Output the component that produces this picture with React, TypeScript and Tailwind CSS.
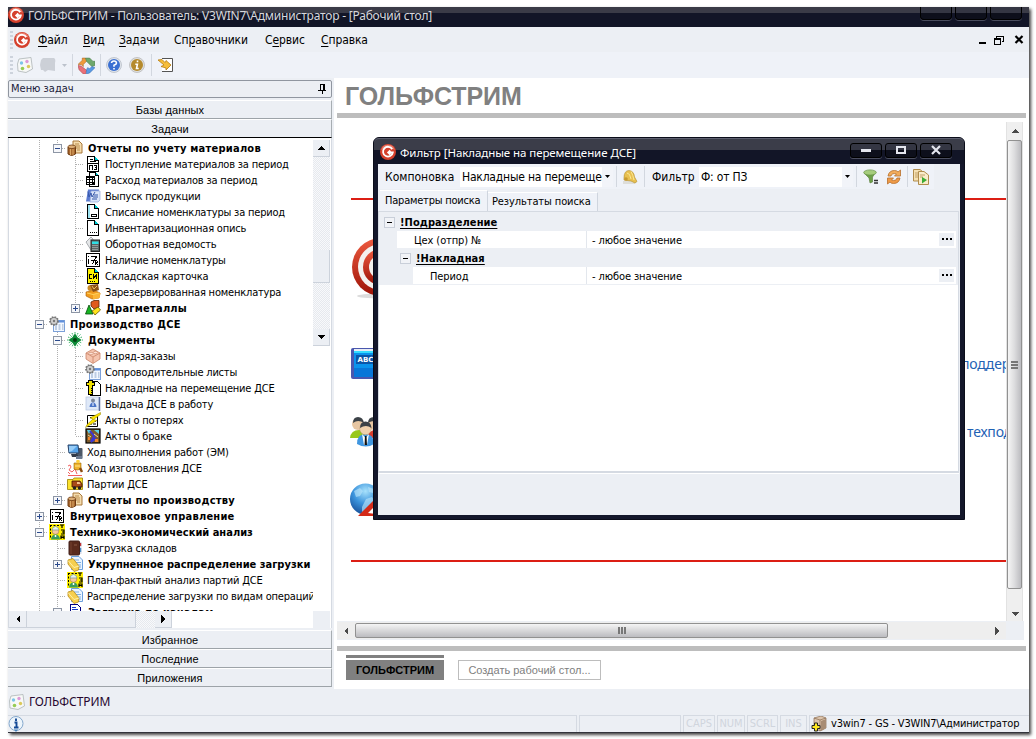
import type { ReactNode } from 'react';

const UI = "font-['DejaVu_Sans_Condensed','DejaVu_Sans',sans-serif]";
const SEGOE = "font-['Noto_Sans',sans-serif]";
const ARIAL = "font-['Liberation_Sans',sans-serif]";

/* ---------- icons ---------- */

function Svg({ children, size = 16, crisp = false }: { children: ReactNode; size?: number; crisp?: boolean }) {
  return (
    <svg width={size} height={size} viewBox="0 0 16 16" fill="none" shapeRendering={crisp ? 'crispEdges' : 'auto'} className="block shrink-0">
      {children}
    </svg>
  );
}

function Logo({ size = 16 }: { size?: number }) {
  return (
    <Svg size={size}>
      <circle cx="8" cy="8" r="8" fill="#d5402c" />
      <path d="M1.200 6A7 7 0 0 1 14.800 6Q8 1.500 1.200 6" fill="#ea7a68" />
      <path d="M12.200 5.200A4.900 4.900 0 1 0 12.800 8.500H8.500M10.300 6.500L8.200 8.500L10.300 10.500" stroke="#fff" strokeWidth="1.800" />
    </Svg>
  );
}

function Sheet({ fill = '#fff' }: { fill?: string }) {
  return (
    <>
      <path d="M2.500 .5H9.500L13.500 4.500V15.500H2.500Z" fill={fill} stroke="#000" />
      <path d="M9.500 .5V4.500H13.500" stroke="#000" fill="#00c8d0" />
    </>
  );
}

const icons: Record<string, ReactNode> = {
  barrel: (
    <Svg>
      <path d="M6 1H12L15 4V13H6Z" fill="#f4dcae" stroke="#a9793a" />
      <path d="M8 4H12M8 6H13M8 8H13M10 10H13" stroke="#b98a4b" />
      <path d="M1 7V14Q4.500 17 8.500 14V7" fill="#a8682f" stroke="#6e3b12" />
      <ellipse cx="4.800" cy="6.800" rx="3.800" ry="1.800" fill="#dcae76" stroke="#6e3b12" strokeWidth=".8" />
      <path d="M3.500 9V15M6 9V15" stroke="#dba866" />
    </Svg>
  ),
  pz: (
    <Svg crisp>
      <Sheet />
      <path d="M5 3.500H8M5 5.500H11M3 7.500H13" stroke="#000" />
      <path d="M4.500 14V9.500H7.500V14M9 9.500H11.500V13.500H9M10 11.500H12" stroke="#000" />
    </Svg>
  ),
  table: (
    <Svg crisp>
      <path d="M4.500 .5H10.500L13.500 3.500V14.500H4.500Z" fill="#fff" stroke="#000" />
      <path d="M10.500 .5V3.500H13.500" fill="#00c8d0" stroke="#000" />
      <rect x="1" y="4" width="9" height="9" fill="#000" />
      <path d="M2 6H4V7H2ZM5 6H7V7H5ZM8 6H9V7H8ZM2 8H4V10H2ZM5 8H7V10H5ZM8 8H9V10H8ZM2 11H4V12H2ZM5 11H7V12H5Z" fill="#fff" />
    </Svg>
  ),
  word: (
    <Svg>
      <path d="M3 1.500H14L12 13.500H1Z" fill="#5b7bd0" />
      <path d="M6 3H15V12L13 14H5Z" fill="#dbe5f8" stroke="#94a8da" strokeWidth=".7" />
      <path d="M3 3.500L4 9L6 5L7 9L10 4M9 7H13M8 9H13M7 11H12" stroke="#3556a8" />
    </Svg>
  ),
  sheetCyan: (
    <Svg crisp>
      <path d="M2.500 .5H9.500L13.500 4.500V14.500H2.500Z" fill="#fff" stroke="#000" />
      <path d="M3 1H5V14H3Z" fill="#9fe4f2" />
      <path d="M9.500 .5V4.500H13.500" stroke="#000" fill="#00c8d0" />
      <rect x="6.500" y="10.500" width="5" height="2" fill="#fff" stroke="#000" />
    </Svg>
  ),
  sheet: (
    <Svg crisp>
      <Sheet />
      <path d="M5 12.500H6M7 12.500H8M9 12.500H10M11 12.500H12" stroke="#000" />
    </Svg>
  ),
  calc: (
    <Svg>
      <path d="M1 6L6 1L8 3V12L6 14Z" fill="#e4e6e8" stroke="#8a8e92" strokeWidth=".7" />
      <rect x="6" y="4" width="8.500" height="11.500" fill="#5a6464" stroke="#222" />
      <rect x="7" y="5.500" width="6.500" height="2.500" fill="#2ee0e6" />
      <path d="M7.500 9.500H13M7.500 11.500H13M7.500 13.500H13" stroke="#c9d2d2" strokeDasharray="1 1" />
    </Svg>
  ),
  iz: (
    <Svg crisp>
      <rect x="1.500" y="1.500" width="13" height="13" fill="#fff" stroke="#000" />
      <path d="M3.500 4V5M3.500 7V12M6 4.500H11.500L7.500 12M6 8.500H12M10 12.500L13 9.500M10 9.500L13 13" stroke="#000" />
    </Svg>
  ),
  card: (
    <Svg crisp>
      <Sheet fill="#fff200" />
      <path d="M7 6.500H4.500V10.500H7M8.500 6V11M8.500 10L11.500 7M11.500 6V11M5 13.500H6M7 13.500H8M9 13.500H10" stroke="#000" />
    </Svg>
  ),
  boxes: (
    <Svg>
      <path d="M1 8L9 6L15 9L14 14L7 15L1 12Z" fill="#f09a1c" stroke="#a85c08" strokeWidth=".6" />
      <path d="M8 10L15.500 9L14.500 14L8 15.500Z" fill="#fbb436" />
      <circle cx="5.500" cy="4" r="3" fill="#c98a2a" />
      <path d="M5 1L13 0L14 6L8 8Z" fill="#8a5018" />
      <path d="M7 2L9 5L12 2" stroke="#f0bc60" />
      <path d="M2 9L8 10.500L14 9" stroke="#ffd25c" />
    </Svg>
  ),
  shapes: (
    <Svg>
      <path d="M6 2L9 .5H14V7L9 9L6 6Z" fill="#e05a1c" stroke="#5c2a0a" strokeWidth=".8" />
      <path d="M4 5L8 14H.500Z" fill="#17b522" stroke="#064d0a" strokeWidth=".8" />
      <path d="M7 11L13 7L15.500 10L10 15Z" fill="#ffe21c" stroke="#6a5a00" strokeWidth=".8" />
    </Svg>
  ),
  gearTable: (
    <Svg>
      <rect x="4.500" y="4.500" width="11" height="11" fill="#f3f8ff" stroke="#7ba0d8" />
      <path d="M4 5.500H15" stroke="#5f8fdc" strokeWidth="2" />
      <path d="M6 9H8M9.500 9H11.500M13 9H14.500M6 11H8M9.500 11H11.500M13 11H14.500M6 13H8M9.500 13H11.500M13 13H14.500" stroke="#8aa4c8" />
      <circle cx="5" cy="5" r="4" fill="#8a8a8a" stroke="#777" strokeDasharray="1.500 1.200" strokeWidth="1.800" />
      <circle cx="5" cy="5" r="3" fill="#d0d0d0" />
      <circle cx="5" cy="5" r="1.200" fill="#777" />
    </Svg>
  ),
  splat: (
    <Svg>
      <path d="M8 0V16M0 8H16M2.500 2.500L13.500 13.500M13.500 2.500L2.500 13.500M5 1L11 15M1 5L15 11M11 1L5 15M15 5L1 11" stroke="#3db368" strokeWidth="1" strokeDasharray="1.600 .9" />
      <path d="M8 3L10 6L13 8L10 10L8 13L6 10L3 8L6 6Z" fill="#0c8a35" stroke="#0c8a35" strokeWidth="1.600" />
      <circle cx="8" cy="8" r="2" fill="#033f14" />
    </Svg>
  ),
  brick: (
    <Svg>
      <path d="M1 5L8 1L15 5V11L8 15.500L1 11Z" fill="#f5c4ae" stroke="#c98468" strokeWidth=".8" />
      <path d="M1 5L8 9L15 5M8 9V15" stroke="#c98468" strokeWidth=".8" />
      <ellipse cx="6" cy="5.500" rx="2.200" ry="1.200" fill="#fce2d6" stroke="#c98468" strokeWidth=".6" />
      <ellipse cx="10.500" cy="4.500" rx="2.200" ry="1.200" fill="#fce2d6" stroke="#c98468" strokeWidth=".6" />
    </Svg>
  ),
  bolt: (
    <Svg crisp>
      <path d="M7.500 1.500H12.500L15.500 4.500V15.500H5.500V8Z" fill="#fff" stroke="#000" />
      <path d="M3.500 .5H7.500V2.500H9.500V5.500H7.500V14.500H3.500V5.500H1.500V2.500H3.500Z" fill="#f0e000" stroke="#000" />
      <path d="M6 8.500H8M6 10.500H8M6 12.500H8" stroke="#000" />
    </Svg>
  ),
  person: (
    <Svg>
      <rect x="1" y="1" width="13" height="13" fill="#dfe9f8" stroke="#b4c4de" strokeWidth=".7" />
      <path d="M14.500 1V15" stroke="#5a6ea0" strokeWidth="1.500" />
      <circle cx="8" cy="4.500" r="2" fill="#7c879c" />
      <path d="M4.500 11Q5 6.500 8 6.500T11.500 11Z" fill="#4a74c8" />
      <path d="M8 7V10" stroke="#fff" />
    </Svg>
  ),
  lightning: (
    <Svg>
      <path d="M2.500 3.500H12.500V14.500H2.500Z" fill="#fff" stroke="#000" />
      <path d="M5 5.500H10M5 12H7M9 9.500H11M8 12H11" stroke="#000" />
      <path d="M15.500 .5L5 6L8 7L2 12.500L.500 15.500L12 8.500L8.500 7.500L15.500 2.500Z" fill="#ffe600" stroke="#8a7c00" strokeWidth=".5" />
    </Svg>
  ),
  defect: (
    <Svg>
      <rect x="1" y="1" width="14" height="14" fill="#7c5a2c" stroke="#000" strokeWidth="1.200" />
      <path d="M2 2H6L4 6ZM9 2H14V6Z" fill="#5ad0e8" />
      <path d="M5 3L9 8L6 14L11 10" stroke="#3a35d8" strokeWidth="2" />
      <path d="M3 9H5V12H3ZM10 11H13V14H10Z" fill="#f0862a" />
      <path d="M9 6L13 9M3 7L6 9" stroke="#e8dca0" />
    </Svg>
  ),
  monitor: (
    <Svg>
      <rect x="9" y="4" width="6.500" height="11" rx="1" fill="#4c5868" />
      <path d="M1 1H11L12 9H2Z" fill="#56a4ea" stroke="#274064" />
      <path d="M2 2H10L5 7L2 8Z" fill="#97cdf8" />
      <path d="M4 10H10L12 13H5Z" fill="#323a48" />
      <path d="M9 12H15V15H9Z" fill="#6c7a90" />
    </Svg>
  ),
  hammer: (
    <Svg>
      <path d="M1 6L3 5L4 7L2 10L5 12M5 12L8 9L10 14M1 15.500H15M1 12L3 14" stroke="#f26060" strokeWidth="1" />
      <path d="M7 3H14V9Q10 11 7 9Z" fill="#efb22c" stroke="#976408" strokeWidth=".6" />
      <path d="M13 8L15 12" stroke="#8a4c10" strokeWidth="2.500" />
      <path d="M8 6H13" stroke="#ffe590" />
      <circle cx="11" cy="1.500" r="1.800" fill="#ffcf3c" />
    </Svg>
  ),
  truck: (
    <Svg>
      <path d="M.500 3.500H6L7 2H15.500V13.500H.500Z" fill="#fce22c" stroke="#9a8200" strokeWidth=".8" />
      <path d="M5 5H13L15 8V11H5Z" fill="#a84a18" stroke="#441600" strokeWidth=".8" />
      <path d="M10 6H12.500L13.500 8H10Z" fill="#f4c08c" />
      <circle cx="7.500" cy="12" r="1.700" fill="#222" />
      <circle cx="12.500" cy="12" r="1.700" fill="#222" />
    </Svg>
  ),
  worker: (
    <Svg>
      <rect width="16" height="16" fill="#ffee00" />
      <path d="M1 1.500H10M1.500 1V15" stroke="#000" strokeDasharray="2 1.500" />
      <path d="M11 1H15M13 1V4M12 6H15V10H12M13 8H15M12 15V12H15V15M12 13.500H15" stroke="#000" strokeWidth="1.200" />
      <circle cx="6.500" cy="7" r="3.400" fill="#f5c9a0" stroke="#946a42" strokeWidth=".5" />
      <path d="M3 6Q3.500 2.500 6.500 2.500T10 6Z" fill="#e9f3ee" stroke="#7a9a8a" strokeWidth=".7" />
      <path d="M2 15.500Q2.500 10.500 6.500 10.500T11 15.500Z" fill="#3a9c5c" />
      <path d="M6.500 11V13" stroke="#fff" strokeWidth="1.500" />
    </Svg>
  ),
  book: (
    <Svg>
      <path d="M12 2H14.500V14H12Z" fill="#d9ddea" />
      <path d="M13.500 3V6" stroke="#c03838" strokeWidth="1.500" />
      <path d="M13.500 8V12" stroke="#4a8ac0" strokeWidth="1.500" />
      <rect x="2" y="1" width="10.500" height="14" rx="1" fill="#5a2a1c" stroke="#42201a" />
      <path d="M4 2V14" stroke="#74402e" />
      <path d="M7 5H10" stroke="#8a5a44" />
    </Svg>
  ),
  gold: (
    <Svg>
      <path d="M4.500 .5H12L15.500 4V13.500H4.500Z" fill="#eaf4ff" stroke="#6ca0dc" />
      <path d="M7 4H12M8 6.500H14M10 9H14M11 11H14" stroke="#7cb0e4" />
      <path d="M1 4L6 2.500L12 10L11.500 14L7 15.500L1 8Z" fill="#f6cf50" stroke="#b98a18" strokeWidth=".8" />
      <path d="M1 4.500L7 11.500L12 10" stroke="#fff0a8" />
    </Svg>
  ),
  bluedoc: (
    <Svg crisp>
      <path d="M3.500 .5H10.500L13.500 3.500V15.500H3.500Z" fill="#fff" stroke="#000080" />
      <path d="M5 3.500H9M5 5.500H11" stroke="#1438c8" />
    </Svg>
  ),
};

function Palette() {
  return (
    <Svg>
      <path d="M2 2L14 .5L15.500 12L9 15.500L1 14L.500 7Z" fill="#f7f8f7" stroke="#b6bcbd" strokeWidth=".9" />
      <circle cx="4.500" cy="6" r="1.700" fill="#7cc4ea" />
      <circle cx="10" cy="4.500" r="1.700" fill="#dc9ad8" />
      <circle cx="11.500" cy="9.500" r="1.700" fill="#dbc95a" />
      <circle cx="5.500" cy="11.500" r="1.800" fill="#96cc54" />
    </Svg>
  );
}

function Helmet() {
  return (
    <Svg>
      <path d="M1 12H14L13 15H1Z" fill="#dededa" />
      <path d="M2 9Q2 1.500 7 1.500Q12 2 12.500 8L15 12.500L13 14L9 12L2 11Z" fill="#e8c050" stroke="#b08c2c" strokeWidth=".6" />
      <path d="M5 4Q8 4 9 10M9 2.500Q11 6 12 11" stroke="#fbe896" />
      <circle cx="4" cy="10" r="1.800" fill="#c79a30" />
    </Svg>
  );
}

/* ---------- window chrome ---------- */

function CaptionButton({ kind, cut = false }: { kind?: 'min' | 'max' | 'close'; cut?: boolean }) {
  return (
    <div className={`flex items-center justify-center border border-black bg-linear-to-b from-[#343643] from-50% to-[#0d0f1b] to-50% shadow-[0_1px_0_#4a4d5e] ${cut ? 'h-[13px] w-[32px] rounded-b-[4px] border-t-0' : 'h-[15px] w-[32px] rounded-[3px]'}`}>
      {kind && (
        <svg width="12" height="10" viewBox="0 0 12 10" fill="none" stroke="#e4e6ee" strokeWidth="2">
          {kind === 'min' && <path d="M1 5.500H11" strokeWidth="3" />}
          {kind === 'max' && <rect x="2" y="2" width="8" height="6" />}
          {kind === 'close' && <path d="M2 1L10 9M10 1L2 9" strokeWidth="2.200" />}
        </svg>
      )}
    </div>
  );
}

function Grip() {
  return <div className="h-[18px] w-[3px] bg-[repeating-linear-gradient(#cdd3dc_0_2px,transparent_2px_4px)]" />;
}

function Separator({ className = '' }: { className?: string }) {
  return <div className={`w-px bg-[#d2d7df] ${className}`} />;
}

function Arrow({ dir, color = '#000' }: { dir: 'up' | 'down' | 'left' | 'right'; color?: string }) {
  const d = { up: 'M0 6L4 2L8 6Z', down: 'M0 2L4 6L8 2Z', left: 'M6 0L2 4L6 8Z', right: 'M2 0L6 4L2 8Z' }[dir];
  return (
    <svg width="8" height="8" viewBox="0 0 8 8" fill={color} shapeRendering="crispEdges">
      <path d={d} />
    </svg>
  );
}

function MenuItem({ pre = '', hot, rest, className }: { pre?: string; hot: string; rest: string; className: string }) {
  return (
    <span className={`shrink-0 whitespace-nowrap ${className}`}>
      {pre}
      <u className="underline-offset-2">{hot}</u>
      {rest}
    </span>
  );
}

function TitleBar() {
  return (
    <div className={`flex h-[20px] shrink-0 items-start bg-[linear-gradient(#3a3b47_6px,#121527_6px)] ${SEGOE}`}>
      <Logo />
      <span className="ml-[4px] text-[12px] leading-[18px] tracking-[-0.21px] whitespace-nowrap text-[#d6d7dc]">
        ГОЛЬФСТРИМ - Пользователь: V3WIN7\Администратор - [Рабочий стол]
      </span>
      <div className="mr-[7px] ml-auto flex gap-[3px]">
        <CaptionButton cut />
        <CaptionButton cut />
        <CaptionButton cut />
      </div>
    </div>
  );
}

function MenuBar() {
  return (
    <div className={`flex h-[25px] shrink-0 items-center bg-[#eceff4] pl-[2px] text-[12px] tracking-[-0.1px] text-black ${UI}`}>
      <Grip />
      <div className="ml-[1px] w-[24px]"><Logo /></div>
      <MenuItem hot="Ф" rest="айл" className="w-[45px]" />
      <MenuItem hot="В" rest="ид" className="w-[36px]" />
      <MenuItem hot="З" rest="адачи" className="w-[55px]" />
      <MenuItem pre="Сп" hot="р" rest="авочники" className="w-[91px]" />
      <MenuItem pre="С" hot="е" rest="рвис" className="w-[56px]" />
      <MenuItem hot="С" rest="правка" className="w-[60px]" />
      <svg width="46" height="12" viewBox="0 0 46 12" fill="none" stroke="#000" className="mr-[5px] ml-auto" shapeRendering="crispEdges">
        <path d="M1 9H8" strokeWidth="2" />
        <path d="M18.500 4V2H25.500V7.500H24M18 2H26" />
        <rect x="16.500" y="5.500" width="6" height="5" />
        <path d="M16 5H23" strokeWidth="2" />
        <path d="M37.500 2L44.500 9M44.500 2L37.500 9" strokeWidth="2.200" shapeRendering="auto" />
      </svg>
    </div>
  );
}

function ToolBar() {
  return (
    <div className="flex h-[26px] shrink-0 items-center bg-[#eff2f8] pl-[2px]">
      <Grip />
      <div className="ml-[4px]"><Palette /></div>
      <div className="ml-[7px]">
        <Svg><path d="M3 1H14Q16 2 15 6V14L8 13L5 15L3 13H1L0 8L1 3Z" fill="#ccd0d7" /></Svg>
      </div>
      <svg width="5" height="3" className="ml-[6px]"><path d="M0 0H5L2.500 3Z" fill="#bcc2cc" /></svg>
      <Separator className="ml-[5px] h-[22px]" />
      <div className="ml-[5px]">
        <Svg size={17}>
          <path d="M0 7L4 3V1H7L9 3L5 7V9L3 7Z" fill="#ef9a3c" stroke="#a86020" strokeWidth=".5" />
          <path d="M7 1H11L14 4H16V8L13 9L10 6L8 4Z" fill="#6fa86c" stroke="#4c784c" strokeWidth=".5" />
          <path d="M0 8L3 8.500L8 12.500L7 16H5L1 12Z" fill="#ea7078" stroke="#a44048" strokeWidth=".5" />
          <path d="M13 9L16 10L11 15L8 16V12L9 10L11 11Z" fill="#5a9ae4" stroke="#346ab0" strokeWidth=".5" />
        </Svg>
      </div>
      <Separator className="ml-[5px] h-[22px]" />
      <div className="ml-[5px]">
        <Svg>
          <circle cx="8" cy="8" r="7.500" fill="#dfe4ea" stroke="#b1b8c2" strokeWidth=".7" />
          <circle cx="8" cy="8" r="6" fill="#3a6fd2" />
          <path d="M5.500 6Q5.800 4 8 4T10.500 6Q10.500 7.500 8 8.300V9.800M8 11V12.600" stroke="#fff" strokeWidth="1.600" />
        </Svg>
      </div>
      <div className="ml-[7px]">
        <Svg>
          <circle cx="8" cy="8" r="7.500" fill="#dfe0e0" stroke="#b1b2b2" strokeWidth=".7" />
          <circle cx="8" cy="8" r="6" fill="#b58a2c" />
          <path d="M8.500 3.500V5.300M6.300 7.300H8.400L7.500 11.500H9.700" stroke="#fff" strokeWidth="1.600" />
        </Svg>
      </div>
      <Separator className="ml-[6px] h-[22px]" />
      <div className="ml-[6px]">
        <Svg>
          <path d="M4 1.500H14.500V14.500H4" fill="#fff" stroke="#555" />
          <path d="M0 3L4 2.500L7 5.500L8 4V3.500L13 8L8 13V11L3 9.500L6 8Z" fill="#f6bd38" stroke="#b67c10" strokeWidth=".8" />
        </Svg>
      </div>
    </div>
  );
}

/* ---------- task tree ---------- */

type Row = { guides: string; box?: '+' | '-'; icon: string; text: string; bold?: boolean; tight?: boolean };

// guides: "|" passing line, " " empty, "t" branch, "l" last branch
const rows: Row[] = [
  { guides: '|l', box: '-', icon: 'barrel', text: 'Отчеты по учету материалов', bold: true },
  { guides: '| t', icon: 'pz', text: 'Поступление материалов за период' },
  { guides: '| t', icon: 'table', text: 'Расход материалов за период' },
  { guides: '| t', icon: 'word', text: 'Выпуск продукции' },
  { guides: '| t', icon: 'sheetCyan', text: 'Списание номенклатуры за период' },
  { guides: '| t', icon: 'sheet', text: 'Инвентаризационная опись' },
  { guides: '| t', icon: 'calc', text: 'Оборотная ведомость' },
  { guides: '| t', icon: 'iz', text: 'Наличие номенклатуры' },
  { guides: '| t', icon: 'card', text: 'Складская карточка' },
  { guides: '| t', icon: 'boxes', text: 'Зарезервированная номенклатура' },
  { guides: '| l', box: '+', icon: 'shapes', text: 'Драгметаллы', bold: true },
  { guides: 't', box: '-', icon: 'gearTable', text: 'Производство ДСЕ', bold: true },
  { guides: '|t', box: '-', icon: 'splat', text: 'Документы', bold: true },
  { guides: '||t', icon: 'brick', text: 'Наряд-заказы' },
  { guides: '||t', icon: 'gearTable', text: 'Сопроводительные листы' },
  { guides: '||t', icon: 'bolt', text: 'Накладные на перемещение ДСЕ' },
  { guides: '||t', icon: 'person', text: 'Выдача ДСЕ в работу' },
  { guides: '||t', icon: 'lightning', text: 'Акты о потерях' },
  { guides: '||l', icon: 'defect', text: 'Акты о браке' },
  { guides: '|t', icon: 'monitor', text: 'Ход выполнения работ (ЭМ)' },
  { guides: '|t', icon: 'hammer', text: 'Ход изготовления ДСЕ' },
  { guides: '|t', icon: 'truck', text: 'Партии ДСЕ' },
  { guides: '|l', box: '+', icon: 'barrel', text: 'Отчеты по производству', bold: true },
  { guides: 't', box: '+', icon: 'iz', text: 'Внутрицеховое управление', bold: true },
  { guides: 't', box: '-', icon: 'worker', text: 'Технико-экономический анализ', bold: true, tight: true },
  { guides: '|t', icon: 'book', text: 'Загрузка складов' },
  { guides: '|t', box: '+', icon: 'gold', text: 'Укрупненное распределение загрузки', bold: true, tight: true },
  { guides: '|t', icon: 'worker', text: 'План-фактный анализ партий ДСЕ' },
  { guides: '|t', icon: 'gold', text: 'Распределение загрузки по видам операций' },
  { guides: '|t', box: '-', icon: 'bluedoc', text: 'Загрузка по каналам', bold: true },
];

function Guide({ kind, box }: { kind: string; box?: '+' | '-' }) {
  return (
    <svg width="18" height="16" viewBox="0 0 18 16" fill="none" shapeRendering="crispEdges" className="block shrink-0">
      <g stroke="#b0b0b0" strokeDasharray="1 1">
        {(kind === '|' || kind === 't') && <path d="M9.500 0V16" />}
        {kind === 'l' && <path d="M9.500 0V8" />}
        {(kind === 't' || kind === 'l') && <path d="M10 8.500H18" />}
      </g>
      {box && (
        <>
          <rect x="5.500" y="4.500" width="8" height="8" fill="#f6f7fa" stroke="#8d96a5" />
          <path d={box === '+' ? 'M7 8.500H12M9.500 6V11' : 'M7 8.500H12'} stroke="#2b4a8c" />
        </>
      )}
    </svg>
  );
}

function labelStyle(row: Row) {
  if (!row.bold) return 'ml-[4px] tracking-[-0.19px]';
  return row.tight ? 'ml-[5px] font-bold' : 'ml-[5px] font-bold tracking-[0.24px]';
}

function TreeRow({ row }: { row: Row }) {
  const cells = row.guides.split('');
  return (
    <div className="flex h-[16px] items-center pl-[21px]">
      {cells.map((kind, i) => (
        <Guide key={i} kind={kind} box={i === cells.length - 1 ? row.box : undefined} />
      ))}
      <div className="ml-px">{icons[row.icon]}</div>
      <span className={`pt-[2px] text-[11px] leading-[14px] whitespace-nowrap text-black ${labelStyle(row)}`}>{row.text}</span>
    </div>
  );
}

const dots = 'bg-[repeating-conic-gradient(#e6e9ee_0_25%,#f8f9fb_0_50%)] bg-size-[2px_2px]';
const scrollBox = 'flex items-center justify-center border-r border-b border-[#ccd2db] bg-[#eceff4]';

function SectionButton({ label, last = false }: { label: string; last?: boolean }) {
  return (
    <div className={`flex h-[19px] shrink-0 items-center justify-center border-t border-r border-b border-t-white border-r-[#a7adb2] bg-[#eceff4] pt-px pl-px ${last ? 'border-b-black' : 'border-b-[#9da3a8]'} text-[11px] leading-none tracking-[0.1px] text-black ${ARIAL}`}>
      {label}
    </div>
  );
}

function TaskPanel() {
  return (
    <div className={`flex w-[324px] shrink-0 flex-col pt-[2px] ${UI}`}>
      <div className="flex h-[18px] shrink-0 items-center justify-between rounded-[2px] border border-[#9096a0] pr-[5px] pl-[2px] text-[11px] text-[#1b1b3a]">
        <span className="pt-px">Меню задач</span>
        <svg width="8" height="10" viewBox="0 0 8 10" fill="none" stroke="#000" shapeRendering="crispEdges">
          <path d="M2.500 6V.5H6V6M5.500 0V6M0 6.500H8M4 7V10" />
        </svg>
      </div>
      <div className="pt-[2px]" />
      <SectionButton label="Базы данных" />
      <SectionButton label="Задачи" last />
      <div className="flex h-[490px] shrink-0 flex-col border-r border-l border-[#d5dae2] bg-white pt-[2px]">
        <div className="flex h-[471px] shrink-0 pr-px">
          <div className="flex-1 overflow-hidden">
            {rows.map((row) => <TreeRow key={row.text} row={row} />)}
          </div>
          <div className="flex h-[206px] w-[17px] flex-col">
            <div className={`h-[17px] ${scrollBox}`}><Arrow dir="up" /></div>
            <div className={`h-[93px] ${dots}`} />
            <div className={`h-[33px] ${scrollBox}`} />
            <div className={`flex-1 ${dots}`} />
            <div className={`h-[17px] ${scrollBox}`}><Arrow dir="down" /></div>
          </div>
        </div>
        <div className="flex h-[17px] pr-px">
          <div className={`w-[18px] ${scrollBox}`}><Arrow dir="left" /></div>
          <div className={`w-[109px] ${scrollBox}`} />
          <div className={`w-[19px] ${dots}`} />
          <div className={`w-[17px] ${scrollBox}`}><Arrow dir="right" /></div>
          <div className="ml-auto w-[17px] bg-[#eceff4]" />
        </div>
      </div>
      <div className="pt-[2px]" />
      <SectionButton label="Избранное" />
      <SectionButton label="Последние" />
      <SectionButton label="Приложения" />
    </div>
  );
}

/* ---------- desktop ---------- */

function DesktopContent() {
  return (
    <div className="h-[499px] w-[669px] overflow-hidden bg-white pt-[76px] pl-[13px]">
      <div className="ml-px h-[2px] bg-[#dc1e14]" />
      <svg width="62" height="62" viewBox="0 0 62 62" className="mt-[38px] block">
        <defs>
          <linearGradient id="red" x1="0" y1="0" x2="0" y2="1">
            <stop offset="0" stopColor="#ee5b40" />
            <stop offset="1" stopColor="#9c1206" />
          </linearGradient>
        </defs>
        <ellipse cx="31" cy="58" rx="24" ry="2.500" fill="#dcdcdc" />
        <circle cx="31" cy="29" r="29" fill="url(#red)" />
        <circle cx="31" cy="29" r="23" fill="#f4f1ee" />
        <circle cx="31" cy="29" r="18" fill="url(#red)" />
        <circle cx="31" cy="29" r="12" fill="#f4f1ee" />
        <circle cx="31" cy="29" r="7" fill="url(#red)" />
      </svg>
      <div className="mt-[48px] flex h-[32px] items-center">
        <svg width="46" height="32" viewBox="0 0 46 32" className="ml-px shrink-0">
          <path d="M2 0H46V31H2Q0 31 0 29V2Q0 0 2 0Z" fill="#4a57ae" />
          <path d="M3 1H46V3H3Z" fill="#e8ecf4" />
          <path d="M3 3H46V29H3Z" fill="#0a92ec" />
          <path d="M3 3H46V5H3Z" fill="#35dcff" />
          <path d="M3 20H46V29H3Z" fill="#0876d8" />
          <rect x="5" y="7" width="38" height="9" fill="#0b55a8" />
          <text x="6.500" y="14" fontSize="7" fontWeight="bold" fill="#fff" fontFamily="DejaVu Sans">ABC</text>
        </svg>
        <span className={`ml-[564px] shrink-0 text-[14px] leading-[20px] tracking-[-0.2px] text-[#1f62b4] ${SEGOE}`}>поддержка</span>
      </div>
      <div className="mt-[36px] flex h-[32px] items-center">
        <svg width="36" height="32" viewBox="0 0 36 32" className="shrink-0">
          <path d="M0 22Q1 14 9 14T17 22H0Z" fill="#98c81c" />
          <circle cx="8" cy="8" r="6" fill="#e7c6a2" />
          <path d="M3 7Q3 1 8 1T14 7Q8 3 3 7Z" fill="#3c4248" />
          <path d="M17 22Q18 14 26 14T34 22H17Z" fill="#d83c2c" />
          <circle cx="24" cy="8" r="6" fill="#e7c6a2" />
          <path d="M18 7Q18 1 24 1T30 7Q24 3 18 7Z" fill="#3c4248" />
          <path d="M7 28Q7 18 15.500 18T24 28Q16 33 7 28Z" fill="#3f96e0" />
          <path d="M12 18L15.500 22L19 18L17 29H14Z" fill="#fff" />
          <path d="M15 20H16.500L17 29H14.500Z" fill="#111" />
          <circle cx="15.500" cy="13" r="5.800" fill="#f0d0ac" stroke="#a8845c" strokeWidth=".4" />
          <path d="M10 12Q10 5.500 15.500 5.500T21.500 12Q16 8 10 12Z" fill="#3c4248" />
        </svg>
        <span className={`ml-[581px] shrink-0 text-[14px] leading-[20px] tracking-[-0.2px] text-[#1f62b4] ${SEGOE}`}>техподдержка</span>
      </div>
      <svg width="36" height="36" viewBox="0 0 36 36" className="mt-[35px] block">
        <defs>
          <radialGradient id="globe" cx=".5" cy=".25" r=".8">
            <stop offset="0" stopColor="#a8e2fc" />
            <stop offset=".5" stopColor="#3b93dc" />
            <stop offset="1" stopColor="#154a94" />
          </radialGradient>
        </defs>
        <circle cx="15.500" cy="16" r="15.500" fill="url(#globe)" />
        <path d="M4 8L10 5L13 8L10 13L6 14ZM16 16L22 14L26 20L20 27L12 29L12 24ZM18 4L24 6L23 10L19 9Z" fill="#b7e4fa" opacity=".65" />
        <path d="M8 33L24 17L36 17V33Z" fill="#d42a18" />
        <path d="M18 30L23 25L26 31Z" fill="#fff" />
      </svg>
      <div className="mt-[41px] ml-px h-[2px] bg-[#dc1e14]" />
    </div>
  );
}

function Desktop() {
  return (
    <div className={`ml-[2px] flex-1 bg-white pl-[3px] ${ARIAL}`}>
      <div className="flex h-[35px] items-center pt-px pl-[8px] text-[25px] leading-none font-bold tracking-[-0.1px] text-[#808080]">ГОЛЬФСТРИМ</div>
      <div className="mr-[3px] h-[5px] bg-[#bdbdbd]" />
      <div className="mt-[4px] flex">
        <DesktopContent />
        <div className="flex w-[17px] flex-col items-center border-x border-[#e2e2e2] bg-[#efefef]">
          <div className="flex h-[18px] items-center"><Arrow dir="up" color="#4a4a4a" /></div>
          <div className="flex h-[449px] w-[15px] flex-col items-center justify-center gap-px rounded-[2px] border border-[#919191] bg-linear-to-r from-[#f5f5f5] via-[#dcdcde] to-[#bcbcc0]">
            <div className="h-[2px] w-[7px] bg-[#777]" />
            <div className="h-[2px] w-[7px] bg-[#777]" />
            <div className="h-[2px] w-[7px] bg-[#777]" />
          </div>
          <div className="mt-auto mb-[3px]"><Arrow dir="down" color="#4a4a4a" /></div>
        </div>
      </div>
      <div className="mr-[5px] flex h-[19px] items-center bg-[#eceff4]">
        <div className="flex h-[17px] w-[669px] items-center bg-[#eeeeee]">
          <div className="flex w-[18px] justify-center"><Arrow dir="left" color="#4a4a4a" /></div>
          <div className="flex h-[15px] w-[533px] items-center justify-center gap-px rounded-[2px] border border-[#919191] bg-linear-to-b from-[#f5f5f5] via-[#d8d8da] to-[#bcbcc0]">
            <div className="h-[7px] w-[2px] bg-[#777]" />
            <div className="h-[7px] w-[2px] bg-[#777]" />
            <div className="h-[7px] w-[2px] bg-[#777]" />
          </div>
          <div className="mr-[5px] ml-auto"><Arrow dir="right" color="#4a4a4a" /></div>
        </div>
      </div>
      <div className="mt-[6px] mr-[3px] h-[5px] bg-[#bdbdbd]" />
      <div className="mt-[4px] ml-[9px] flex items-end gap-[14px]">
        <div className="w-[98px]">
          <div className="mb-[2px] h-[3px] bg-[#808080]" />
          <div className="flex h-[20px] items-center justify-center bg-[#808080] text-[11px] font-bold text-black">ГОЛЬФСТРИМ</div>
        </div>
        <div className="flex h-[20px] w-[143px] items-center justify-center border border-[#bdbdbd] text-[11px] text-[#808080]">Создать рабочий стол...</div>
      </div>
    </div>
  );
}

/* ---------- filter dialog ---------- */

function Combo({ value, className }: { value: string; className: string }) {
  return (
    <div className="flex h-[20px] items-center">
      <div className={`flex h-full items-center overflow-hidden bg-white pl-[2px] tracking-[-0.2px] whitespace-nowrap ${className}`}>{value}</div>
      <div className="flex h-full w-[11px] items-center justify-center bg-[#f2f4f9]">
        <svg width="5" height="3"><path d="M0 0H5L2.500 3Z" fill="#000" /></svg>
      </div>
    </div>
  );
}

function GridExpander() {
  return (
    <div className="flex size-[11px] shrink-0 items-center justify-center border border-[#c9cfd9] bg-[#f1f3f7]">
      <div className="h-px w-[5px] bg-black" />
    </div>
  );
}

function GridGroup({ label, className }: { label: string; className: string }) {
  return (
    <div className={`flex items-center bg-[#eceff4] pt-[2px] ${className}`}>
      <GridExpander />
      <span className="ml-[5px] text-[11px] leading-[15px] font-bold tracking-[0.08px] underline underline-offset-2">{label}</span>
    </div>
  );
}

function GridProperty({ label, indent }: { label: string; indent: string }) {
  return (
    <div className="flex h-[17px] bg-[#eceff4] pr-[2px]">
      <div className={`shrink-0 ${indent}`} />
      <div className="flex flex-1 bg-white">
        <div className="flex flex-1 items-center pt-[3px] pl-[17px] leading-[14px] tracking-[-0.1px]">{label}</div>
        <div className="flex w-[370px] items-center border-l border-[#e3e7ed] pr-[2px] pl-[5px]">
          <span className="pt-[3px] leading-[14px] tracking-[-0.1px]">- любое значение</span>
          <div className="mb-px ml-auto flex h-[13px] w-[15px] items-center justify-center gap-[2px] bg-[#eceff4]">
            <div className="size-[2px] bg-black" />
            <div className="size-[2px] bg-black" />
            <div className="size-[2px] bg-black" />
          </div>
        </div>
      </div>
    </div>
  );
}

function FilterDialog() {
  return (
    <div className="absolute top-[137px] left-[373px] flex h-[383px] w-[592px] flex-col rounded-t-[6px] border border-[#0b0d1a] bg-[#14172b]">
      <div className={`flex h-[26px] shrink-0 items-center rounded-t-[5px] border-t border-[#5e6070] bg-[linear-gradient(#3b3d49_11px,#121527_11px)] pr-[12px] pl-[6px] ${SEGOE}`}>
        <Logo />
        <span className="mt-[2px] ml-[4px] text-[11.5px] tracking-[-0.07px] text-white">Фильтр [Накладные на перемещение ДСЕ]</span>
        <div className="mb-[3px] ml-auto flex gap-[3px]">
          <CaptionButton kind="min" />
          <CaptionButton kind="max" />
          <CaptionButton kind="close" />
        </div>
      </div>
      <div className={`mx-[4px] mb-[4px] flex flex-1 flex-col bg-[#eceff4] text-[11px] text-black ${UI}`}>
        <div className="flex h-[25px] w-[556px] shrink-0 items-center bg-[#eff2f8] pl-[7px] text-[12px]">
          <span className="w-[75px]">Компоновка</span>
          <Combo value="Накладные на перемещение ДСЕ" className="w-[142px]" />
          <Separator className="ml-[3px] h-[21px]" />
          <div className="ml-[5px]"><Helmet /></div>
          <Separator className="ml-[6px] h-[21px]" />
          <span className="ml-[7px] w-[47px]">Фильтр</span>
          <Combo value="Ф: от ПЗ" className="w-[143px]" />
          <Separator className="ml-[3px] h-[21px]" />
          <div className="ml-[6px]">
            <Svg>
              <path d="M1 4L6 9L7 14L9.500 13V8L13 3Z" fill="#6da048" stroke="#557a38" strokeWidth=".6" />
              <ellipse cx="7" cy="3.500" rx="6.300" ry="2.600" fill="#a5cc7c" stroke="#6a944c" strokeWidth=".7" />
              <path d="M11 11.500H15M11 14H15" stroke="#333" strokeWidth="1.400" />
            </Svg>
          </div>
          <div className="ml-[7px]">
            <Svg>
              <path d="M2 7Q3 1.500 8.500 1.500Q11 1.500 12 3L14.500 1V7H8.500L10.500 5Q6 3.500 5 7Z" fill="#f2ac5c" stroke="#b8702c" strokeWidth=".8" />
              <path d="M14 9Q13 14.500 7.500 14.500Q5 14.500 4 13L1.500 15V9H7.500L5.500 11Q10 12.500 11 9Z" fill="#ee9a48" stroke="#b8702c" strokeWidth=".8" />
            </Svg>
          </div>
          <Separator className="ml-[5px] h-[21px]" />
          <div className="ml-[5px]">
            <Svg>
              <path d="M.500 .5H7L10 3V12H.500Z" fill="#f5e0b2" stroke="#b08c4c" />
              <path d="M5.500 2.500H11L15.500 6V15.500H5.500Z" fill="#f9ecca" stroke="#b08c4c" />
              <path d="M2 4H5M2 6H5M2 8H5M7 6H12M7 8H10" stroke="#c0a068" />
              <path d="M9 8V14.500L14 11Z" fill="#3cac34" />
            </Svg>
          </div>
        </div>
        <div className="flex h-[22px] shrink-0 items-end pl-[2px]">
          <div className="flex h-[21px] w-[108px] items-center border-t border-r border-t-white border-r-[#cfd5de] bg-[#eff2f8] pl-[5px] tracking-[-0.22px]">Параметры поиска</div>
          <div className="flex h-[19px] w-[110px] items-center border-t border-r border-t-white border-r-[#cfd5de] bg-[#eff2f8] pt-px pl-[4px] tracking-[-0.1px]">Результаты поиска</div>
        </div>
        <div className="mr-[1px] h-[262px] shrink-0 border border-b-2 border-[#d5dae2] bg-white">
          <GridGroup label="!Подразделение" className="h-[19px] pl-[5px]" />
          <GridProperty label="Цех (отпр) №" indent="w-[18px]" />
          <GridGroup label="!Накладная" className="h-[19px] pl-[21px]" />
          <GridProperty label="Период" indent="w-[34px]" />
          <div className="h-px bg-[#eceff4]" />
        </div>
        <div className="mx-px flex-1 border-t border-white" />
      </div>
    </div>
  );
}

/* ---------- status area ---------- */

function StatusCell({ label = '', className }: { label?: string; className: string }) {
  return <div className={`mr-[2px] flex h-[17px] items-center justify-center border border-b-0 border-[#d5dae2] text-[11px] text-[#d0d5dd] ${className}`}>{label}</div>;
}

function StatusArea() {
  return (
    <div className={`shrink-0 bg-[#eceff4] text-[12px] text-black ${UI}`}>
      <div className="flex h-[26px] items-center pl-[1px]">
        <Palette />
        <span className={`ml-[4px] tracking-[-0.05px] text-[#26062e] ${SEGOE}`}>ГОЛЬФСТРИМ</span>
      </div>
      <div className="flex h-[17px]">
        <div className="mr-[2px] flex w-[569px] border-t border-r border-[#d5dae2]">
          <Svg>
            <circle cx="8" cy="7.500" r="7" fill="#edf5fb" stroke="#84a8cc" />
            <path d="M6 13.500L8 16L10 13.500Z" fill="#4a84bc" />
            <path d="M8 2.500V5M6.500 6.500H8.500V11.500M6 11.500H10.500" stroke="#144a96" strokeWidth="1.900" />
          </Svg>
        </div>
        <StatusCell className="w-[102px]" />
        <StatusCell label="CAPS" className="w-[32px]" />
        <StatusCell label="NUM" className="w-[28px]" />
        <StatusCell label="SCRL" className="w-[31px]" />
        <StatusCell label="INS" className="w-[27px]" />
        <div className="flex flex-1 items-center border-t border-l border-[#d5dae2] pl-[1px] text-[11px]">
          <Svg>
            <path d="M3 2L10 0L15 2V12L9 15L3 12Z" fill="#dcc4ac" stroke="#8a6c50" strokeWidth=".7" />
            <path d="M3 2L9 4L15 2M9 4V15" stroke="#8a6c50" strokeWidth=".7" />
            <path d="M10 5L15 3V12L10 15Z" fill="#a88c74" />
            <path d="M3.500 7H6.500V9.500H9V12.500H6.500V15H3.500V12.500H1V9.500H3.500Z" fill="#ffe820" stroke="#222" />
          </Svg>
          <span className="ml-[4px] tracking-[-0.17px] whitespace-nowrap">v3win7 - GS - V3WIN7\Администратор</span>
        </div>
      </div>
    </div>
  );
}

export default function App() {
  return (
    <div className="relative h-[739px] w-[1036px] overflow-hidden bg-white pt-[7px] pl-[8px]">
      <div className="flex h-[726px] w-[1021px] flex-col border-b border-[#33343c] bg-[#eceff4] shadow-[2px_2px_3px_#444]">
        <TitleBar />
        <MenuBar />
        <ToolBar />
        <div className="flex h-[611px] shrink-0">
          <TaskPanel />
          <Desktop />
        </div>
        <StatusArea />
      </div>
      <FilterDialog />
    </div>
  );
}
